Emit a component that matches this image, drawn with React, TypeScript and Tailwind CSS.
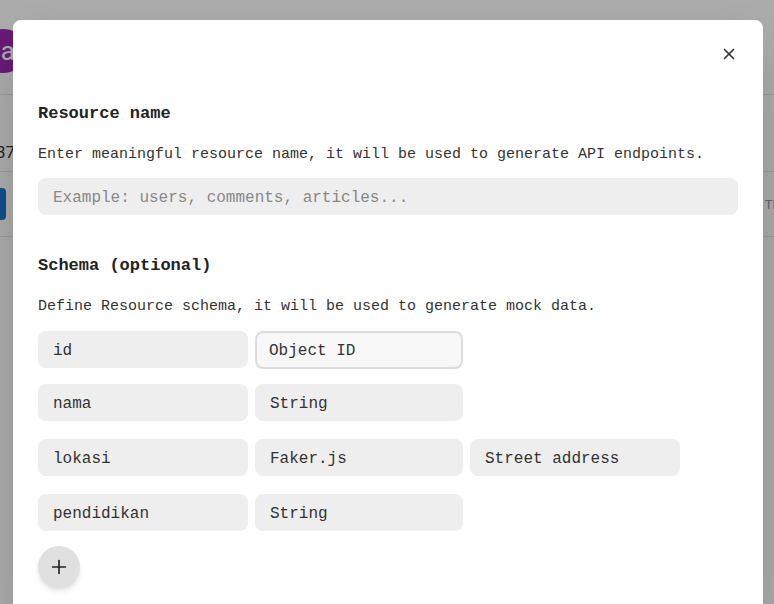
import React from "react";
import { X, Plus } from "lucide-react";

type Field = {
  name: string;
  type: string;
  extra?: string;
  focused?: boolean;
};

const FIELDS: Field[] = [
  { name: "id", type: "Object ID", focused: true },
  { name: "nama", type: "String" },
  { name: "lokasi", type: "Faker.js", extra: "Street address" },
  { name: "pendidikan", type: "String" },
];

const mono = "font-['Liberation_Mono',monospace]";

function Box({ children, focused, narrow }: { children: React.ReactNode; focused?: boolean; narrow?: boolean }) {
  const w = narrow ? "w-[208px]" : "w-[210px]";
  return (
    <div
      className={
        focused
          ? `${w} h-[38px] rounded-lg border-2 border-[#dcdcdc] bg-[#f8f8f8] pl-[12px] pt-[1px] flex items-center text-[16px] text-[#333]`
          : `${w} h-[37px] rounded-lg bg-[#eeeeee] pl-[15px] pt-[2px] flex items-center text-[16px] text-[#333]`
      }
    >
      {children}
    </div>
  );
}

// page behind the dialog, only its edges show
function Backdrop() {
  return (
    <div className="absolute inset-0 bg-white font-['Roboto',sans-serif]">
      <div className="h-[95px] border-b border-[#e6e6e6] flex items-start">
        <div className="ml-[-18px] mt-[29px] w-[44px] h-[44px] rounded-full bg-[#9c27b0] flex items-center justify-end pr-[11px] text-white text-[26px]">
          a
        </div>
      </div>
      <div className="h-[77px] border-b border-[#e6e6e6] flex items-start pt-[45px] text-[17px] text-[#333] ml-[-4px]">
        37
      </div>
      <div className="h-[65px] border-b border-[#e6e6e6] flex items-center justify-between">
        <div className="ml-[-30px] w-[36px] h-[32px] rounded bg-[#1976d2]" />
        <div className="mr-[-6px] text-[13px] text-[#999] pt-[2px]">TE</div>
      </div>
    </div>
  );
}

export default function App() {
  return (
    <div className="relative w-full h-[604px] overflow-hidden">
      <Backdrop />
      <div className="absolute inset-0 bg-black/[0.33]" />

      <div className={`absolute left-[13px] top-[20px] w-[750px] h-[600px] bg-white rounded-lg shadow-2xl ${mono}`}>
        <button className="absolute right-[25px] top-[25px] w-[18px] h-[18px] flex items-center justify-center text-[#333]">
          <X size={20} strokeWidth={2.2} />
        </button>

        <div className="pt-[82px] px-[25px] flex flex-col">
          <h2 className="text-[17px] leading-[24px] font-bold text-[#222]">Resource name</h2>
          <p className="mt-[19px] text-[15px] leading-[20px] text-[#333]">
            Enter meaningful resource name, it will be used to generate API endpoints.
          </p>
          <div className="mt-[13px] h-[37px] rounded-lg bg-[#eeeeee] pl-[15px] pt-[2px] flex items-center text-[16px] text-[#888]">
            Example: users, comments, articles...
          </div>

          <h2 className="mt-[39px] text-[17px] leading-[24px] font-bold text-[#222]">Schema (optional)</h2>
          <p className="mt-[19px] text-[15px] leading-[20px] text-[#333]">
            Define Resource schema, it will be used to generate mock data.
          </p>

          <div className="mt-[14px] flex flex-col">
            {FIELDS.map((f, i) => (
              <div key={f.name} className={`flex gap-[7px] ${i === 0 ? "" : i === 1 ? "mt-[15px]" : "mt-[18px]"}`}>
                <Box>{f.name}</Box>
                <Box focused={f.focused} narrow>{f.type}</Box>
                {f.extra && <Box>{f.extra}</Box>}
              </div>
            ))}
          </div>

          <button className="mt-[15px] w-[42px] h-[42px] rounded-full bg-[#e0e0e0] shadow-md flex items-center justify-center text-[#222]">
            <Plus size={22} strokeWidth={1.8} />
          </button>
        </div>
      </div>
    </div>
  );
}
